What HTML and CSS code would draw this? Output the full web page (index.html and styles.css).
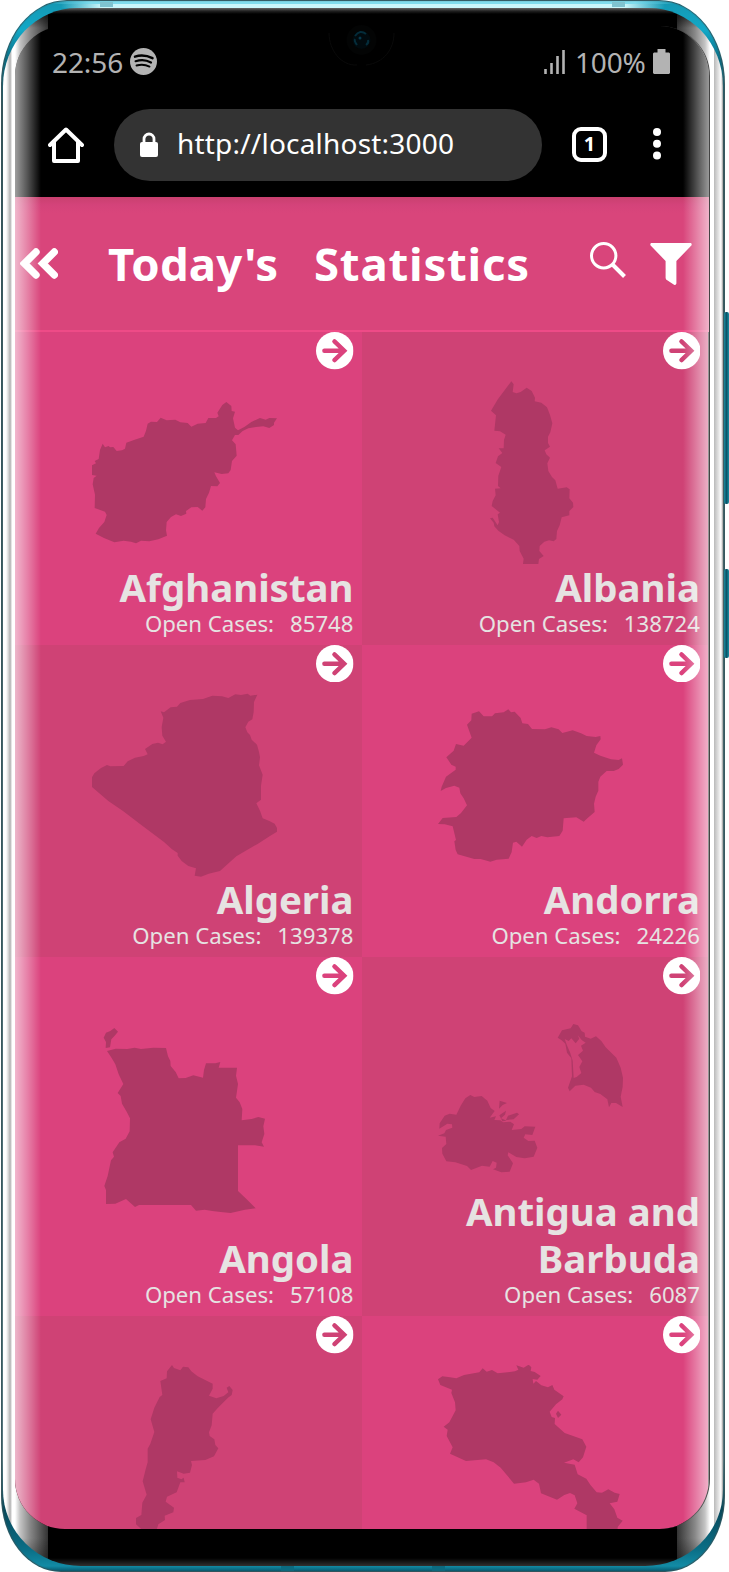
FILE: index.html
```html
<!DOCTYPE html>
<html lang="en">
<head>
<meta charset="utf-8">
<title>Today's Statistics</title>
<link rel="stylesheet" href="styles.css">
</head>
<body>
<svg class="defs" width="0" height="0" aria-hidden="true">
  <symbol id="arrow" viewBox="0 0 37 37">
    <circle cx="18.5" cy="18.5" r="18.5" fill="#fff"/>
    <path d="M8.3 18.5H27M18.2 9.3l9.6 9.2-9.6 9.2" fill="none" stroke="currentColor" stroke-width="4.4" stroke-linecap="round" stroke-linejoin="miter"/>
  </symbol>
</svg>
<div class="device">
  <i class="side-key volume"></i>
  <i class="side-key power"></i>
  <div class="frame">
    <div class="bezel">
      <svg class="camera" viewBox="0 0 68 44">
        <path d="M1 8C1 25 13 41 29 40M38 40C56 38 66 24 66 8" fill="none" stroke="#0a0a0a"/>
        <circle cx="33.500" cy="15" r="15" fill="#030404"/>
        <circle cx="33.500" cy="15" r="9" fill="#010a0e"/>
        <path d="M27 11q5-7 11-2M29 20q-3-4-2-6M40 15q1 3-2 5" fill="none" stroke="#042c3a" stroke-width="2"/>
        <circle cx="32" cy="13" r="1.500" fill="#06384b"/>
      </svg>
      <div class="screen">
        <div class="status">
          <span class="clock">22:56</span>
          <svg class="music" viewBox="0 0 27 27"><circle cx="13.500" cy="13.500" r="13.500" fill="#b3b3b3"/><g fill="none" stroke="#000" stroke-linecap="round"><path d="M5 8.600Q14 6 22.500 10.200" stroke-width="2.500"/><path d="M5.600 13.200Q14 10.500 21 14.500" stroke-width="2.200"/><path d="M6.500 17.500Q13.500 15.500 19.500 18.600" stroke-width="1.900"/></g></svg>
          <svg class="signal" viewBox="0 0 21 24"><path d="M1.500 24v-5M7.500 24V13M13.500 24V6M19.500 24V0" stroke="#b3b3b3" stroke-width="2.600"/></svg>
          <span class="percent">100%</span>
          <svg class="battery" viewBox="0 0 17 25"><path d="M4.500 0h8v3.500H16l1 1V24l-1 1H1l-1-1V4.500l1-1h3.500z" fill="#b3b3b3"/></svg>
        </div>
        <div class="browser">
          <svg class="home" viewBox="0 0 36 36"><path d="M2 18 18 2.500 34 18M6 15v19h24V15" fill="none" stroke="#fff" stroke-width="4" stroke-linejoin="round" stroke-linecap="round"/></svg>
          <div class="address">
            <svg class="lock" viewBox="0 0 18 25"><path d="M4 11V7a5 5 0 0 1 10 0v4" fill="none" stroke="#fff" stroke-width="2.800"/><rect y="10" width="18" height="15" rx="2" fill="#fff"/></svg>
            <span class="url">http://localhost:3000</span>
          </div>
          <span class="tabs">1</span>
          <svg class="more" viewBox="0 0 8 32"><g fill="#fff"><circle cx="4" cy="4" r="4"/><circle cx="4" cy="15.700" r="4"/><circle cx="4" cy="27.400" r="4"/></g></svg>
        </div>
        <header class="title-bar">
          <svg class="back" viewBox="0 0 38 31"><path d="M16 4 4.500 15.500 16 27M34.300 4 22.800 15.500 34.300 27" fill="none" stroke="#fff" stroke-width="7.400" stroke-linecap="round"/></svg>
          <h1 class="heading"><span class="today">Today's</span> <span class="stats">Statistics</span></h1>
          <svg class="search" viewBox="0 0 36 36"><circle cx="13.700" cy="13.700" r="12.200" fill="none" stroke="#fff" stroke-width="3"/><path d="m22.500 22.500 12 12" stroke="#fff" stroke-width="4"/></svg>
          <svg class="filter" viewBox="0 0 42 42"><path d="M1 0h40q1 1 .6 2.300L26.400 18v22.500q-.4 1.500-2 1.500l-8.300-5.500-.5-1.500V18L.4 2.300Q0 1 1 0z" fill="#fff"/></svg>
        </header>
        <main class="grid">
          <article class="card light">
            <svg class="go"><use href="#arrow"/></svg>
            <div class="map-box"><svg class="map" viewBox="276 150 555 555"><path d="M276 403 288 397 284 390 296 384 300 357 308 338 315 349 326 345 330 349 340 348 350 360 366 358 375 353 379 335 404 326 431 317 438 299 443 278 453 272 471 273 482 260 500 268 526 266 541 274 563 276 574 287 593 278 617 276 625 261 648 261 656 256 652 245 667 222 679 213 694 225 695 240 705 242 699 262 705 290 714 298 733 288 754 273 780 261 797 266 808 261 831 262 822 275 822 282 808 291 790 286 768 288 745 292 728 300 715 312 705 312 696 328 707 340 710 374 696 390 692 417 685 427 665 429 643 424 648 436 660 456 652 466 633 465 627 485 618 504 616 529 607 539 593 528 574 529 558 540 559 548 543 555 528 550 513 558 500 573 498 598 501 614 475 625 448 631 423 629 408 637 393 632 371 629 343 634 312 621 287 608 297 591 313 573 320 552 315 542 284 531 285 491 278 460 281 441 290 434 276 432z"/></svg></div>
            <h2 class="name">Afghanistan</h2>
            <p class="cases"><span>Open Cases:</span><span>85748</span></p>
          </article>
          <article class="card dark">
            <svg class="go"><use href="#arrow"/></svg>
            <div class="map-box"><svg class="map" viewBox="222 150 555 555"><path d="M429 168 442 151 449 160 446 183 457 187 470 183 488 170 503 180 513 200 512 211 532 215 549 229 558 252 565 277 559 304 552 317 552 336 558 347 542 358 547 370 558 380 550 397 553 420 564 438 574 448 581 473 608 469 617 475 616 502 627 515 628 528 616 540 616 553 593 559 587 583 579 600 577 624 569 631 555 628 541 632 527 645 526 660 539 675 525 684 523 699 477 699 479 683 467 660 466 645 449 626 422 613 403 599 391 586 389 575 378 562 386 560 401 583 405 573 401 550 408 545 383 525 386 510 395 493 393 473 410 472 402 465 403 434 412 408 395 396 402 376 415 366 404 352 419 352 420 327 425 311 408 301 391 299 396 253 381 239 402 204z"/></svg></div>
            <h2 class="name">Albania</h2>
            <p class="cases"><span>Open Cases:</span><span>138724</span></p>
          </article>
          <article class="card dark">
            <svg class="go"><use href="#arrow"/></svg>
            <div class="map-box"><svg class="map" viewBox="276 157 555 555"><path d="M276 439V410L283 398 303 382 321 373 331 377 371 376 383 362 405 351 431 346 443 341 435 325 457 310 474 306 488 311 498 303 487 285 485 259 490 231 482 212 492 215 512 200 531 198 541 187 570 178 609 175 637 165 666 167 685 172 706 161 723 163 743 159 751 165 772 162 762 184 761 214 757 236 745 243 736 260 742 275 750 283 755 297 771 312 777 334 780 350 777 374 788 402 783 435 783 477 769 488 780 510 788 533 808 541 824 549 831 562V573L811 585 774 609 709 647 660 691 626 699 603 708 584 705 588 683 565 676 545 661 533 645 533 637 516 626 492 604 420 550 370 512 325 481z"/></svg></div>
            <h2 class="name">Algeria</h2>
            <p class="cases"><span>Open Cases:</span><span>139378</span></p>
          </article>
          <article class="card light">
            <svg class="go"><use href="#arrow"/></svg>
            <div class="map-box"><svg class="map" viewBox="222 157 555 555"><path d="M309 252 322 239 323 219 345 212 359 227 384 227 393 218 419 215 433 206 441 215 452 213 470 232 475 248 492 250 504 265 543 266 562 260 584 266 595 277 626 269 651 278 668 286 695 289 709 286 710 296 697 314 690 336 709 345 741 356 764 358 774 353 777 372 764 385 749 391 728 391 709 408 703 423 703 450 695 468 690 489 692 514 671 532 659 543 637 530 599 533 596 570 586 586 550 590 532 586 518 592 503 586 488 597 474 618 457 603 447 606 443 634 434 654 398 657 379 663 350 655 331 655 302 647 281 641 275 628 271 602 276 598 266 557 242 551 222 550 236 532 277 529 291 517 309 494 299 473 289 458 286 441 271 435 246 442 230 451 233 438 246 408 275 387 275 378 262 372 247 350 269 330 276 310 299 315 323 291z"/></svg></div>
            <h2 class="name">Andorra</h2>
            <p class="cases"><span>Open Cases:</span><span>24226</span></p>
          </article>
          <article class="card light">
            <svg class="go"><use href="#arrow"/></svg>
            <div class="map-box"><svg class="map" viewBox="276 231 555 555"><path d="M311 260 318 245 331 240 343 231 354 242 344 254 334 265 330 289 317 291 318 273zM321 300 347 293 382 294 404 290 423 294 460 290 498 291 504 316 511 330 512 345 527 363 536 382 557 381 580 373 609 380 612 357 618 337 646 337 661 333 656 350H711L708 374 714 399 708 440 719 454 727 474 725 508 755 504 775 498 795 503 790 526 793 549 785 574 792 587 765 583H714V720L740 745 767 772 735 776 692 786 662 783 637 780 614 776 588 779 573 762H417L405 768 378 744 346 758 318 759V717L313 705 323 675 333 628 342 617 338 604 358 574 377 563 389 541 390 502 380 482 366 458 362 435 353 426 370 399 356 370 346 340 335 321z"/></svg></div>
            <h2 class="name">Angola</h2>
            <p class="cases"><span>Open Cases:</span><span>57108</span></p>
          </article>
          <article class="card dark">
            <svg class="go"><use href="#arrow"/></svg>
            <div class="map-box"><svg class="map" viewBox="222 165 555 555"><path d="M581 260 594 238 620 232 628 219 642 223 653 241 662 245 663 257 680 263 696 256 712 270 725 289 757 320 770 350 777 380 776 407 770 437 776 468 756 456 742 456 735 469 730 445 709 429 692 423 681 410 659 401 634 404 617 421 612 410 624 376 622 322 609 305 604 278 593 268z"/><path class="lagoon" d="M602 264 614 270 622 262 635 277 646 263 641 252 653 267 665 275 651 284 657 299 642 312 655 331 646 348 652 366 638 378 629 381 626 329 618 304 610 286z"/><path d="M277 491 290 464 304 442 319 432 331 438 353 435 370 449 380 471 392 480 377 500 396 496 391 507 409 508 417 514 439 512 450 520 443 537 472 534 482 526 514 527 505 552 484 550 479 560 493 570 512 569 520 590 509 617 482 622 457 618 433 604 431 613 447 637 437 662 412 664 387 655 396 650 398 635 386 630 377 647 354 644 321 657 309 645 274 634 247 631 235 608 234 591 247 579 245 557 222 554 241 547 246 537 265 530 264 520 250 518 226 533 227 517 242 494 257 488zM407 449 429 456 416 462 405 473zM406 493 426 479 423 491 411 502 428 509 415 511zM432 494 459 485 465 490 449 505 426 507z"/></svg></div>
            <h2 class="name">Antigua and Barbuda</h2>
            <p class="cases"><span>Open Cases:</span><span>6087</span></p>
          </article>
          <article class="card dark">
            <svg class="go"><use href="#arrow"/></svg>
            <div class="map-box"><svg class="map" viewBox="276 189 555 555"><path d="M501 208 516 189 522 198 541 205 549 194 565 196 574 208 593 223 638 245 638 260 627 281 649 289 671 282 685 271 680 257 688 252 698 264 695 279 684 287 654 317 638 335 635 370 627 391 629 402 643 412 646 429 655 439 642 463 616 474 573 477 576 489 570 512 551 515 531 508 532 527 544 532 551 527 554 541 541 541 530 571 501 584 497 599 522 617 520 631 494 641 495 654 475 667 468 689 480 760H420L428 685 408 667V648L424 639 427 602 440 578 428 538 437 502 443 481V440L451 425 463 390 452 352 463 317 479 285 487 279 481 237 500 229z"/></svg></div>
          </article>
          <article class="card light">
            <svg class="go"><use href="#arrow"/></svg>
            <div class="map-box"><svg class="map" viewBox="222 189 555 555"><path d="M222 232 235 223 258 226 277 229 300 219 346 211 356 199 368 209 384 204 401 214 453 208 463 203 457 190 479 197 494 188 502 196 500 207 512 210 530 222 520 233 506 231 508 245 516 237 532 250 552 256 565 249 571 263 599 283 595 292 576 307 557 329 563 345 573 348 572 366 602 393 655 412 667 434 657 466 644 481 628 472 600 482 632 488 641 517 667 530 680 550 698 571 714 572 733 562 752 572 767 576 760 599 737 604 751 622 760 647 776 656 761 675 757 760H690L668 685V640L631 620 640 604 632 580 618 573 601 579 579 593 531 574 525 545 509 533 486 541 450 545 410 497 389 481 366 472 306 477 258 455 266 436 248 402 251 383 239 374 256 361 264 346 275 325 273 301 262 273 264 263 229 249zM576 335 582 326 592 338 582 348z"/></svg></div>
          </article>
        </main>
      </div>
      <i class="glare left"></i>
      <i class="glare right"></i>
    </div>
  </div>
</div>
</body>
</html>
```
FILE: styles.css
```css
* { box-sizing: border-box; }
body { margin: 0; background: #fff; font-family: "Noto Sans", sans-serif; }
.defs { position: absolute; }
svg { display: block; flex: none; }

.device { position: relative; width: 729px; height: 1572px; padding: 0 4px 0 1px; overflow: hidden; }
.side-key { position: absolute; right: 0; width: 5px; border-radius: 2px; background: linear-gradient(90deg, #1c8a9c, #0a5468 50%, #1a8da2); }
.side-key.volume { top: 312px; height: 192px; }
.side-key.power { top: 569px; height: 89px; }

.frame {
  height: 1572px; padding: 8px 2px 6px; border-radius: 66px 66px 60px 60px / 84px 84px 76px 76px;
  background:
    linear-gradient(90deg, transparent 99px, #7fc3d0 99px 112px, transparent 112px 611px, #7fc3d0 611px 624px, transparent 624px) 0 2px / 100% 5px no-repeat,
    linear-gradient(90deg, transparent 280px, #0b6a80 280px 293px, transparent 293px 431px, #0b6a80 431px 444px, transparent 444px) 0 1566px / 100% 6px no-repeat,
    linear-gradient(90deg, transparent 50px, #7fdced 90px 634px, transparent 674px) 0 1px / 100% 3px no-repeat,
    linear-gradient(90deg, transparent 60px, #c9f6fb 100px 624px, transparent 664px) 0 4px / 100% 4px no-repeat,
    linear-gradient(180deg, #1596b1, #12a9c8 30px, #0b6a80 60px, #37565c 110px, #5b7c82 1460px, #08485a 1510px, #0b6f87 1550px, #128ba5 1566px, #055066 1572px);
  box-shadow: inset 0 0 1px 1px #37565c;
}
.bezel {
  position: relative; height: 1558px; padding: 18px 14px 35px 12px; overflow: hidden;
  border-radius: 74px 74px 78px 78px / 78px 78px 76px 76px;
  background:
    linear-gradient(180deg, #666 0, #222 3px, rgba(0,0,0,.6) 6px, transparent 20px),
    linear-gradient(0deg, #303030 0, rgba(0,0,0,.3) 8px, transparent 28px),
    linear-gradient(90deg, #fff 0 3px, #ddd 5px, #b4b4b4 7px, #c9c9c9 8px, #fff 9px 12px, #c4c4c4 17px, #888 27px, #333 45px, #000 45px 674px, #333 674px, #888 692px, #c4c4c4 702px, #fff 707px 711px, #b9b9b9 711px, #e8e8e8 716px, #fff 718px, #999 720px);
}
.camera { position: absolute; left: 325px; top: 17px; width: 68px; height: 44px; z-index: 1; }
.screen { height: 1503px; border-radius: 50px; background: #000; overflow: hidden; }
.glare { position: absolute; top: 18px; width: 26px; height: 1503px; }
.glare::before { content: ""; display: block; height: 100%; }
.glare { overflow: hidden; width: 60px; }
.glare.left { left: 12px; border-radius: 50px 0 0 50px; background: linear-gradient(90deg, rgba(255,255,255,.62), rgba(255,255,255,.34) 12px, transparent 26px); }
.glare.right { right: 13px; border-radius: 0 50px 50px 0; border-right: 1px solid #444; background: linear-gradient(270deg, rgba(255,255,255,.6), rgba(255,255,255,.32) 12px, transparent 26px); }

.status { display: flex; align-items: center; height: 74px; padding: 0 39px 0 37px; color: #b3b3b3; font-size: 28px; line-height: 34px; }
.clock { width: 78px; margin-top: -2px; letter-spacing: -.1px; }
.music { width: 27px; height: 27px; margin-top: -4px; }
.signal { width: 21px; height: 24px; margin: -3px 10px 0 auto; }
.percent { width: 72px; margin: -2px 6px 0 0; letter-spacing: -.2px; }
.battery { width: 17px; height: 25px; margin-top: -4px; }

.browser { display: flex; align-items: center; height: 97px; padding: 0 48px 7px 33px; }
.home { width: 36px; height: 36px; }
.address { display: flex; align-items: center; width: 428px; height: 72px; margin-left: 30px; padding-left: 26px; border-radius: 36px; background: #333; }
.lock { width: 18px; height: 25px; margin-top: -2px; }
.url { margin: -4px 0 0 19px; color: #fff; font-size: 28px; letter-spacing: .2px; white-space: nowrap; }
.tabs { width: 35px; height: 35px; margin: -1px 0 0 30px; border: 4px solid #fff; border-radius: 9px; color: #fff; font-size: 20px; font-weight: 700; line-height: 26px; text-align: center; }
.more { width: 8px; height: 32px; margin: -2px 0 0 auto; }

.title-bar { display: flex; height: 135px; padding-left: 5px; background: linear-gradient(#c9406f, #d4437a 8px, #d9457b 16px); border-bottom: 2px solid #ee4b87; color: #fff; }
.back { width: 38px; height: 31px; margin-top: 51px; }
.heading { display: flex; margin: 35px 0 0 50px; width: 482px; font-size: 45.500px; line-height: 62px; font-weight: 700; white-space: nowrap; }
.today { width: 206px; letter-spacing: .2px; }
.stats { letter-spacing: .8px; }
.search { width: 36px; height: 36px; margin-top: 45px; }
.filter { width: 42px; height: 42px; margin: 46px 0 0 24px; }

.grid { display: grid; grid-template-columns: 346.500px 346.500px; grid-template-rows: 312.500px 312.500px 359px 312px; }
.card { display: flex; flex-direction: column; padding: 0 8px 9px 0; min-width: 0; color: #e6e3e2; text-align: right; }
.light { background: #db427d; }
.dark { background: #cf4275; }
.go { width: 37.500px; height: 37.500px; align-self: flex-end; }
.light .go { color: #db427d; }
.dark .go { color: #cf4275; }
.map-box { flex: 1; display: flex; align-items: flex-start; justify-content: center; padding-top: 11px; min-height: 0; }
.card:nth-child(5) .map-box { padding-top: 33px; }
.map { width: 185px; height: 185px; fill: #af3865; }
.lagoon { fill: #cf4275; }
.name { margin: 0; font-size: 38.400px; line-height: 47px; font-weight: 700; }
.cases { display: flex; justify-content: flex-end; gap: 16px; margin: 0; font-size: 22.200px; line-height: 25px; }
```
